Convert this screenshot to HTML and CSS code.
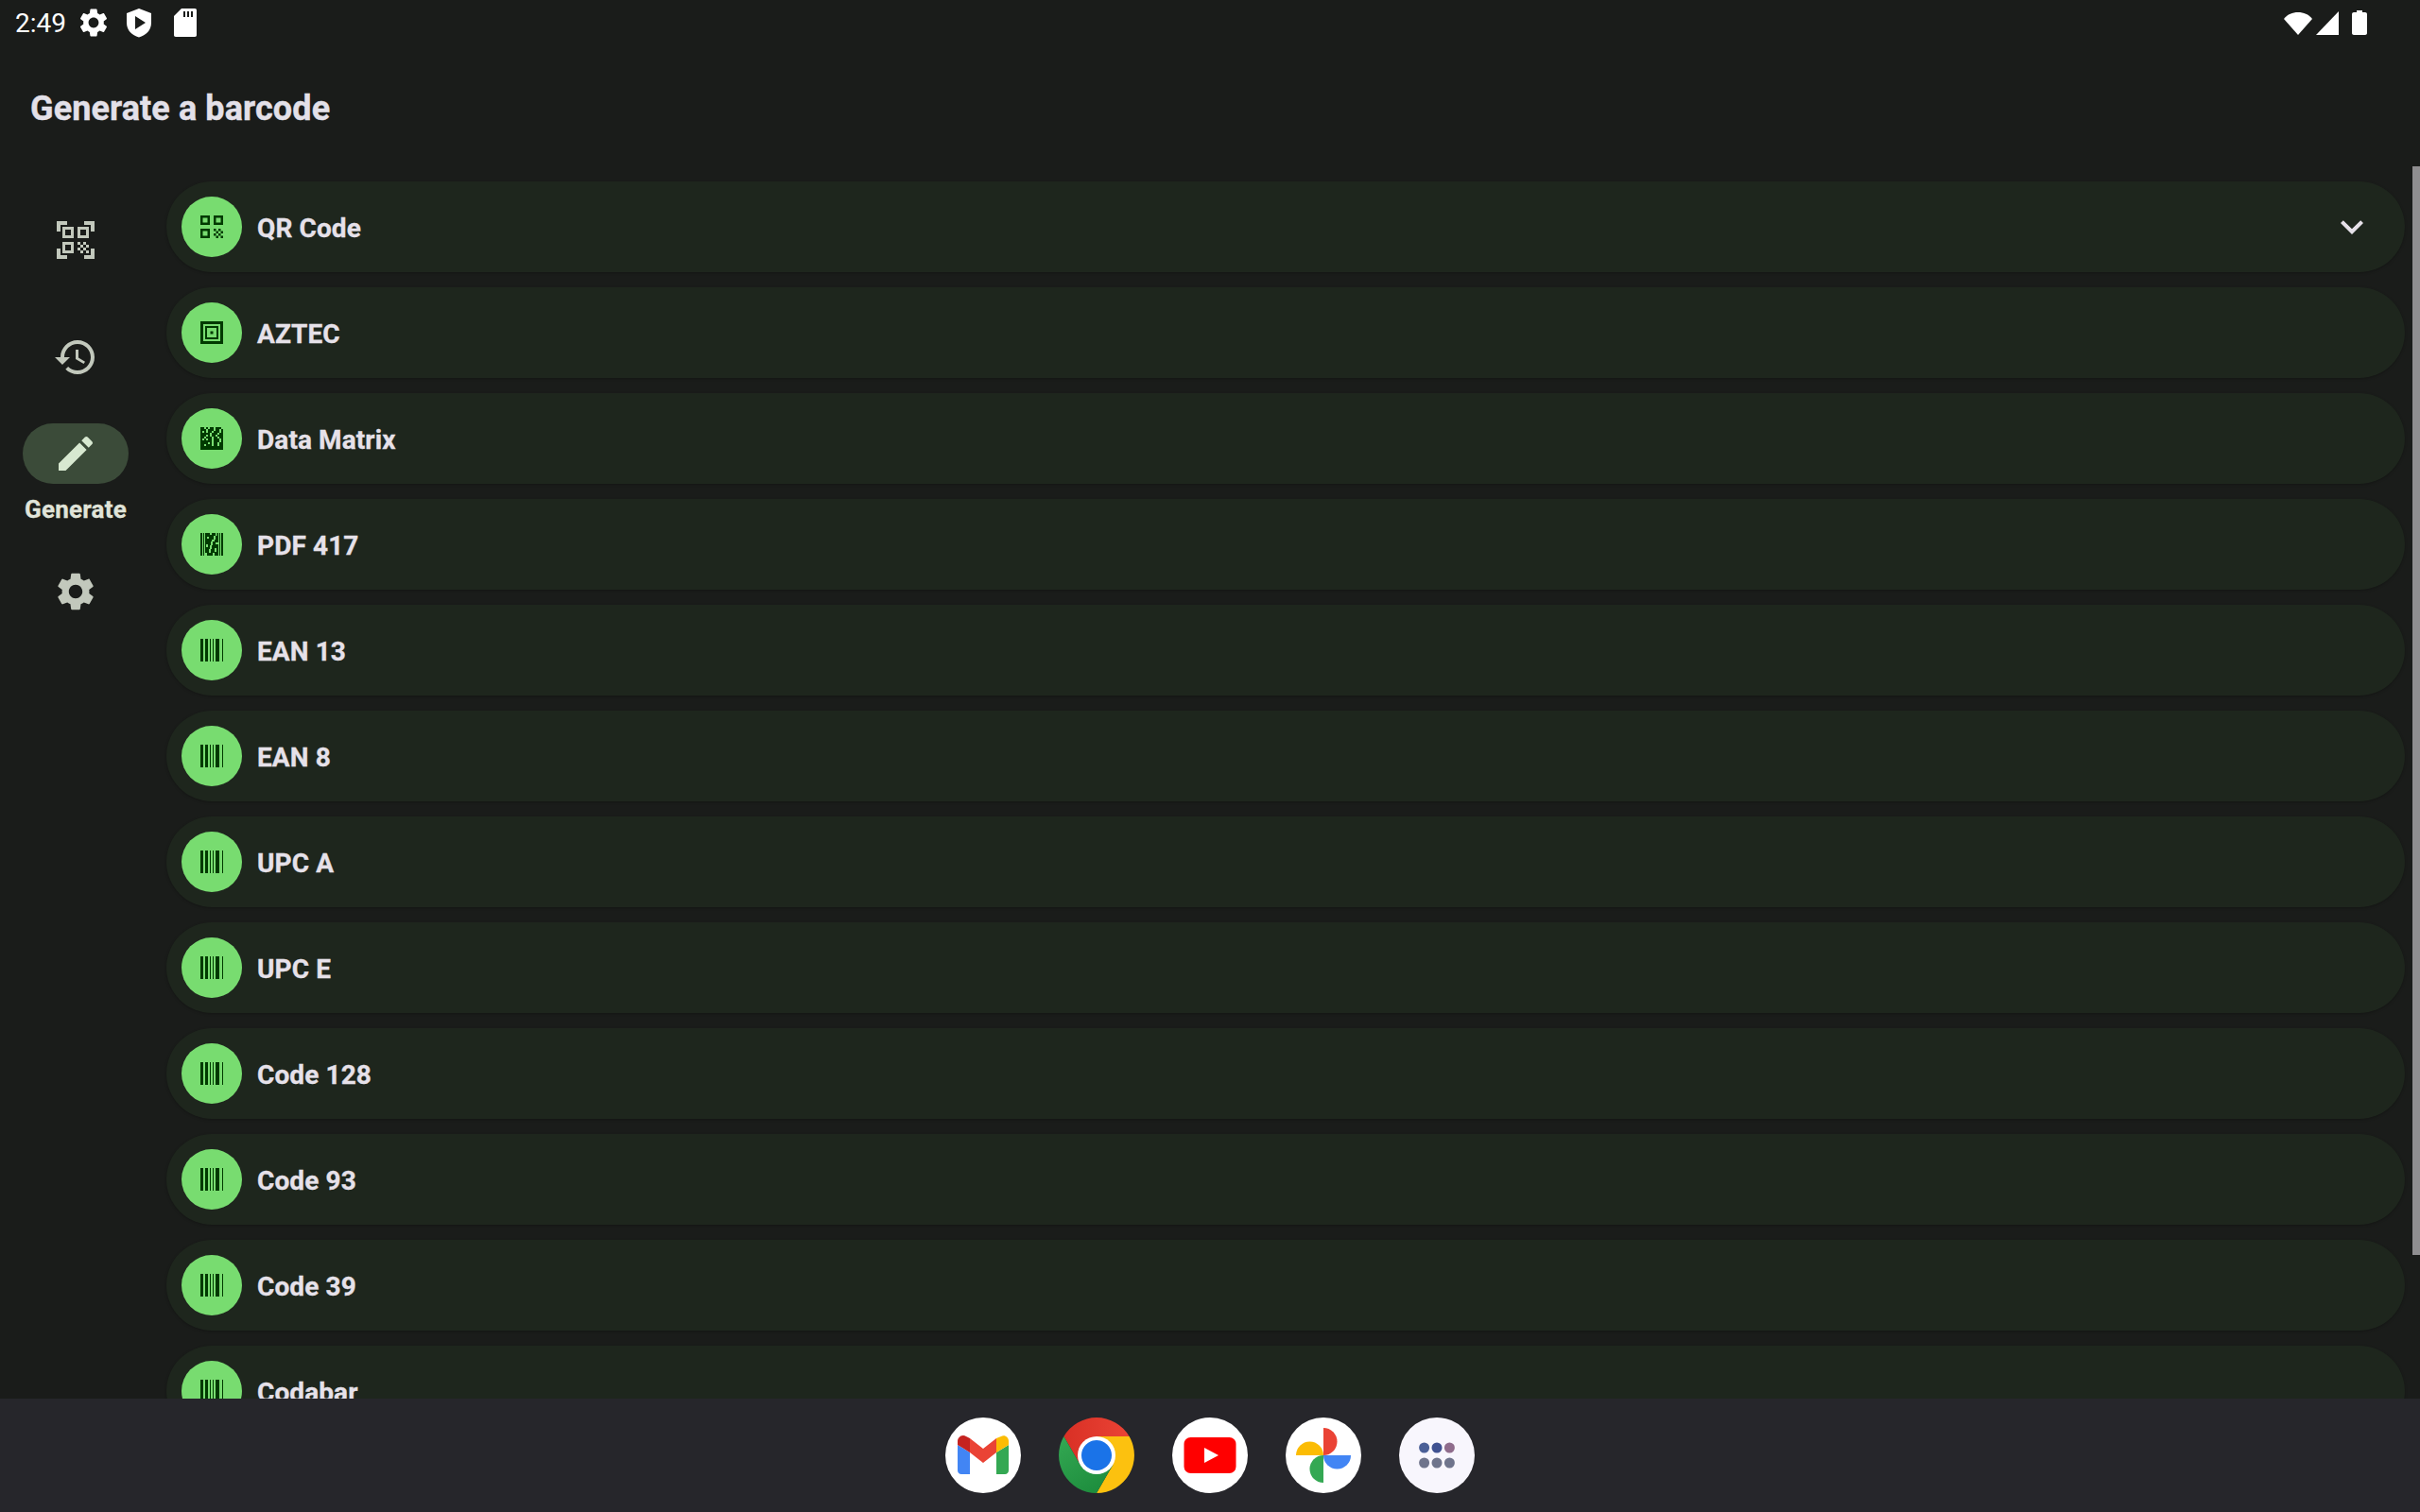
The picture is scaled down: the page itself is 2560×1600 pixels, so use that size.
FILE: index.html
```html
<!DOCTYPE html>
<html lang="en">
  <head>
    <meta charset="UTF-8" />
    <meta name="viewport" content="width=device-width, initial-scale=1.0" />
    <title>Generate a barcode</title>
    <link rel="stylesheet" href="styles.css">
  </head>
  <body>
    <svg class="sprites" aria-hidden="true">
      <symbol id="gear" viewBox="0 0 24 24">
        <path d="M19.14 12.94c.04-.3.06-.61.06-.94 0-.32-.02-.64-.07-.94l2.03-1.58c.18-.14.23-.41.12-.61l-1.92-3.32c-.12-.22-.37-.29-.59-.22l-2.39.96c-.5-.38-1.03-.7-1.62-.94l-.36-2.54c-.04-.24-.24-.41-.48-.41h-3.84c-.24 0-.43.17-.47.41l-.36 2.54c-.59.24-1.13.57-1.62.94l-2.39-.96c-.22-.08-.47 0-.59.22L2.74 8.87c-.12.21-.08.47.12.61l2.03 1.58c-.05.3-.09.63-.09.94s.02.64.07.94l-2.03 1.58c-.18.14-.23.41-.12.61l1.92 3.32c.12.22.37.29.59.22l2.39-.96c.5.38 1.03.7 1.62.94l.36 2.54c.05.24.24.41.48.41h3.84c.24 0 .44-.17.47-.41l.36-2.54c.59-.24 1.13-.56 1.62-.94l2.39.96c.22.08.47 0 .59-.22l1.92-3.32c.12-.22.07-.47-.12-.61l-2.01-1.58zM12 15.6c-1.98 0-3.6-1.62-3.6-3.6s1.62-3.6 3.6-3.6 3.6 1.62 3.6 3.6-1.62 3.6-3.6 3.6z" />
      </symbol>
      <symbol id="barcode" viewBox="0 0 24 24">
        <path d="M0 0h3v24H0zM5 0h3v24H5zM10 0h1v24h-1zM13 0h1v24h-1zM16 0h4v24h-4zM23 0h1v24h-1z" />
      </symbol>
    </svg>

    <div class="status-bar">
      <span class="clock">2:49</span>
      <svg class="status-icon" viewBox="0 0 24 24"><use href="#gear" /></svg>
      <svg class="status-icon" viewBox="0 0 36 36">
        <path fill-rule="evenodd" d="M18 3 31 8v10c0 8-5.500 13.500-13 15.500C10.500 31.500 5 26 5 18V8zM14 11v14l11-7z" />
      </svg>
      <svg class="status-icon" viewBox="0 0 36 36">
        <path fill-rule="evenodd" d="M15 3h14c1.500 0 2 .7 2 2v26c0 1.300-.6 2-2 2H9c-1.400 0-2-.7-2-2V11zM17 6v6h2V6zM21 6v6h2V6zM25 6v6h2V6z" />
      </svg>
      <div class="status-right">
        <svg class="wifi" viewBox="0 0 32 28"><path d="M1 10C5 5 10 3 16 3s11 2 15 7L16 27z" /></svg>
        <svg class="signal" viewBox="0 0 26 28"><path d="M25 2v25H1z" /></svg>
        <svg class="battery" viewBox="0 0 16 28"><path d="M5 1h6v2h3c1 0 2 .7 2 2v20c0 1.300-1 2-2 2H2c-1 0-2-.7-2-2V5c0-1.300 1-2 2-2h3z" /></svg>
      </div>
    </div>

    <header class="app-bar">
      <h1>Generate a barcode</h1>
    </header>

    <main class="content">
      <nav class="rail">
        <div class="rail-item">
          <svg class="rail-icon" viewBox="0 0 48 48">
            <path d="M4 4h11v4H8v7H4zM33 4h11v11h-4V8h-7zM4 33h4v7h7v4H4zM40 33h4v11H33v-4h7z" />
            <path fill-rule="evenodd" d="M10 10h12v12H10zM13 13v6h6v-6zM26 10h12v12H26zM29 13v6h6v-6zM10 26h12v12H10zM13 29v6h6v-6z" />
            <path d="M26 26h3v3h-3zM32 26h3v3h-3zM29 29h3v3h-3zM35 29h3v3h-3zM26 32h3v3h-3zM32 32h3v3h-3zM29 35h3v3h-3zM35 35h3v3h-3z" />
          </svg>
        </div>
        <div class="rail-item">
          <svg class="rail-icon" viewBox="0 0 24 24">
            <path d="M13 3c-4.970 0-9 4.030-9 9H1l3.890 3.890.07.14L9 12H6c0-3.870 3.130-7 7-7s7 3.130 7 7-3.130 7-7 7c-1.930 0-3.680-.79-4.940-2.060l-1.420 1.420C8.270 19.990 10.510 21 13 21c4.970 0 9-4.030 9-9s-4.030-9-9-9zm-1 5v5l4.280 2.540.72-1.210-3.500-2.080V8H12z" />
          </svg>
        </div>
        <div class="rail-item">
          <div class="rail-pill">
            <svg class="rail-icon" viewBox="0 0 24 24">
              <path d="M3 17.250V21h3.750L17.810 9.940l-3.750-3.750L3 17.250zM20.710 7.040c.39-.39.39-1.020 0-1.410l-2.340-2.340c-.39-.39-1.020-.39-1.410 0l-1.830 1.830 3.750 3.750 1.830-1.830z" />
            </svg>
          </div>
          <span class="rail-label">Generate</span>
        </div>
        <div class="rail-item">
          <svg class="rail-icon" viewBox="0 0 24 24"><use href="#gear" /></svg>
        </div>
      </nav>

      <div class="code-list">
        <div class="code-row">
          <span class="code-badge">
            <svg class="code-icon" viewBox="0 0 24 24">
              <path fill-rule="evenodd" d="M0 0h10v10H0zM2.500 2.500v5h5v-5zM14 0h10v10H14zM16.500 2.500v5h5v-5zM0 14h10v10H0zM2.500 16.500v5h5v-5z" />
              <path d="M14 14h2.500v2.500H14zM19 14h2.500v2.500H19zM16.500 16.500H19V19h-2.500zM21.500 16.500H24V19h-2.500zM14 19h2.500v2.500H14zM19 19h2.500v2.500H19zM16.500 21.500H19V24h-2.500zM21.500 21.500H24V24h-2.500z" />
            </svg>
          </span>
          <span class="code-name">QR Code</span>
          <svg class="chevron" viewBox="0 0 24 24"><path d="M16.590 8.590 12 13.170 7.410 8.590 6 10l6 6 6-6z" /></svg>
        </div>
        <div class="code-row">
          <span class="code-badge">
            <svg class="code-icon" viewBox="0 0 24 24">
              <path fill-rule="evenodd" d="M0 0h24v24H0zM3 3v18h18V3zM5 5h14v14H5zM7 7v10h10V7zM10.500 10.500h3v3h-3z" />
            </svg>
          </span>
          <span class="code-name">AZTEC</span>
        </div>
        <div class="code-row">
          <span class="code-badge">
            <svg class="code-icon pixel" viewBox="0 0 24 24">
              <path d="M0 0h24v24H0z" />
              <path class="code-specks" stroke-dasharray="2 2 2 4 2 6" d="M4 1H24M2 5H24M6 9H24M2 13H24M8 17H24" />
              <path class="code-specks" stroke-dasharray="2 6 2 4" d="M6 3H24M10 7H24M4 11H24M12 15H24M4 19H24" />
            </svg>
          </span>
          <span class="code-name">Data Matrix</span>
        </div>
        <div class="code-row">
          <span class="code-badge">
            <svg class="code-icon" viewBox="0 0 24 24">
              <path d="M0 0h2v24H0zM3 0h1v24H3zM20 0h1v24h-1zM22 0h2v24h-2z" />
              <path fill-rule="evenodd" d="M5 0h14v24H5zM10 0h2v2h-2zM16 0h1.500v3H16zM14 3h2v4h-2zM7 4h2v2H7zM12 7h3v2h-3zM11 9h2v4h-2zM16 10h3v2h-3zM6 12h2v3H6zM10 13h2v4h-2zM9 17h2v4H9zM15 16h2v4h-2zM13 21h2v3h-2zM5 21h2v3H5z" />
            </svg>
          </span>
          <span class="code-name">PDF 417</span>
        </div>
        <div class="code-row">
          <span class="code-badge"><svg class="code-icon pixel"><use href="#barcode" /></svg></span>
          <span class="code-name">EAN 13</span>
        </div>
        <div class="code-row">
          <span class="code-badge"><svg class="code-icon pixel"><use href="#barcode" /></svg></span>
          <span class="code-name">EAN 8</span>
        </div>
        <div class="code-row">
          <span class="code-badge"><svg class="code-icon pixel"><use href="#barcode" /></svg></span>
          <span class="code-name">UPC A</span>
        </div>
        <div class="code-row">
          <span class="code-badge"><svg class="code-icon pixel"><use href="#barcode" /></svg></span>
          <span class="code-name">UPC E</span>
        </div>
        <div class="code-row">
          <span class="code-badge"><svg class="code-icon pixel"><use href="#barcode" /></svg></span>
          <span class="code-name">Code 128</span>
        </div>
        <div class="code-row">
          <span class="code-badge"><svg class="code-icon pixel"><use href="#barcode" /></svg></span>
          <span class="code-name">Code 93</span>
        </div>
        <div class="code-row">
          <span class="code-badge"><svg class="code-icon pixel"><use href="#barcode" /></svg></span>
          <span class="code-name">Code 39</span>
        </div>
        <div class="code-row">
          <span class="code-badge"><svg class="code-icon pixel"><use href="#barcode" /></svg></span>
          <span class="code-name">Codabar</span>
        </div>
      </div>

      <div class="scrollbar"></div>
    </main>

    <footer class="dock">
      <svg class="dock-app" viewBox="0 0 80 80">
        <circle cx="40" cy="40" r="40" fill="#fff" />
        <path d="M13 29v27c0 2 1.500 4 4 4h9V37z" fill="#4285f4" />
        <path d="M54 37v23h9c2.500 0 4-2 4-4V29z" fill="#34a853" />
        <path d="M54 37V22l5-2c4-2 8 1 8 5v4z" fill="#fbbc04" />
        <path d="M26 37V22l14 11 14-11v15L40 48z" fill="#ea4335" />
        <path d="M13 29v-4c0-4 5-8 9-5l4 2v15z" fill="#c5221f" />
      </svg>
      <svg class="dock-app" viewBox="0 0 80 80">
        <defs>
          <linearGradient id="chrome-red" x1="0" x2="1" y1="0.500" y2="0.500">
            <stop offset="0" stop-color="#d93025" />
            <stop offset="1" stop-color="#ea4335" />
          </linearGradient>
          <linearGradient id="chrome-green" x1="0" x2="0.600" y1="0" y2="1">
            <stop offset="0" stop-color="#34a853" />
            <stop offset="1" stop-color="#1e8e3e" />
          </linearGradient>
        </defs>
        <path d="M5.400 20A40 40 0 0 1 74.600 20H40L22.700 50z" fill="url(#chrome-red)" />
        <path d="M74.600 20A40 40 0 0 1 40 80L57.300 50 40 20z" fill="#fcc10f" />
        <path d="M40 80A40 40 0 0 1 5.400 20L22.700 50H57.300z" fill="url(#chrome-green)" />
        <circle cx="40" cy="40" r="20" fill="#fff" />
        <circle cx="40" cy="40" r="16" fill="#1a73e8" />
      </svg>
      <svg class="dock-app" viewBox="0 0 80 80">
        <circle cx="40" cy="40" r="40" fill="#fff" />
        <rect x="12.500" y="21" width="55" height="38" rx="7" fill="#f00" />
        <path d="M34 32v16l15-8z" fill="#fff" />
      </svg>
      <svg class="dock-app" viewBox="0 0 80 80">
        <circle cx="40" cy="40" r="40" fill="#fff" />
        <path d="M40 11a14.500 14.500 0 0 1 0 29z" fill="#ea4335" />
        <path d="M11 40a14.500 14.500 0 0 1 29 0z" fill="#fbbc04" />
        <path d="M40 69a14.500 14.500 0 0 1 0-29z" fill="#34a853" />
        <path d="M69 40a14.500 14.500 0 0 1-29 0z" fill="#4285f4" />
      </svg>
      <svg class="dock-app" viewBox="0 0 80 80">
        <circle cx="40" cy="40" r="40" fill="#f8f6fd" />
        <circle cx="26.600" cy="32" r="5.500" fill="#4a5f97" />
        <circle cx="40" cy="32" r="5.500" fill="#3f5191" />
        <circle cx="53.400" cy="32" r="5.500" fill="#8f6c8c" />
        <circle cx="26.600" cy="48" r="5.500" fill="#6f748c" />
        <circle cx="40" cy="48" r="5.500" fill="#6f748c" />
        <circle cx="53.400" cy="48" r="5.500" fill="#6f748c" />
      </svg>
    </footer>
  </body>
</html>
```

FILE: styles.css
```css
* {
  box-sizing: border-box;
}
html,
body {
  height: 100%;
}
body {
  margin: 0;
  height: 1600px;
  display: flex;
  flex-direction: column;
  overflow: hidden;
  background-color: #1a1c1a;
  color: #e6e1e9;
  font-family: Roboto, "Liberation Sans", sans-serif;
}
.sprites {
  display: none;
}

/* status bar */
.status-bar {
  flex: none;
  height: 48px;
  padding: 0 56px 0 16px;
  display: flex;
  align-items: center;
  gap: 12px;
  color: #fff;
  fill: #fff;
}
.clock {
  font-size: 28px;
  margin-right: -1px;
}
.status-icon {
  width: 36px;
  height: 36px;
}
.status-right {
  margin-left: auto;
  display: flex;
  align-items: center;
}
.wifi {
  width: 32px;
  height: 28px;
}
.signal {
  width: 26px;
  height: 28px;
  margin-left: 2px;
}
.battery {
  width: 16px;
  height: 28px;
  margin-left: 13px;
}

/* title */
.app-bar {
  flex: none;
  height: 128px;
  padding: 5px 32px 0;
  display: flex;
  align-items: center;
}
.app-bar h1 {
  margin: 0;
  font-size: 36px;
  font-weight: 700;
  letter-spacing: 0.1px;
  color: #e3e0e8;
  -webkit-text-stroke: 0.4px #e3e0e8;
}

/* rail + list */
.content {
  flex: 1;
  min-height: 0;
  position: relative;
  display: flex;
  overflow: hidden;
}
.rail {
  flex: none;
  width: 160px;
  padding-top: 16px;
  display: grid;
  grid-auto-rows: 124px;
  align-content: start;
  color: #c2c8bc;
  fill: #c2c8bc;
}
.rail-item {
  display: flex;
  flex-direction: column;
  align-items: center;
  justify-content: center;
}
.rail-icon {
  width: 48px;
  height: 48px;
}
.rail-pill {
  width: 112px;
  height: 64px;
  border-radius: 32px;
  display: flex;
  align-items: center;
  justify-content: center;
  background-color: #3b4b39;
  fill: #d7e8d0;
}
.rail-label {
  margin-top: 10px;
  font-size: 26px;
  line-height: 34px;
  font-weight: 700;
  letter-spacing: 0.2px;
  color: #e0e4d9;
  -webkit-text-stroke: 0.3px #e0e4d9;
}
.code-list {
  flex: 1;
  padding: 16px 16px 0;
  display: flex;
  flex-direction: column;
  gap: 16px;
}
.code-row {
  flex: none;
  height: 96px;
  padding: 0 32px 0 16px;
  display: flex;
  align-items: center;
  gap: 16px;
  border-radius: 48px;
  background-color: #1e261d;
  box-shadow: 0 1px 3px rgba(0, 0, 0, 0.25);
}
.code-badge {
  width: 64px;
  height: 64px;
  border-radius: 50%;
  display: flex;
  align-items: center;
  justify-content: center;
  background-color: #78dc70;
  color: #003a00;
  fill: #003a00;
}
.code-icon {
  width: 24px;
  height: 24px;
}
.code-specks {
  fill: none;
  stroke: #78dc70;
  stroke-width: 2;
}
.pixel {
  shape-rendering: crispEdges;
}
.code-name {
  padding-top: 2px;
  font-size: 28px;
  font-weight: 700;
  letter-spacing: 0.1px;
  -webkit-text-stroke: 0.3px #e6e1e9;
}
.chevron {
  width: 48px;
  height: 48px;
  margin-left: auto;
  fill: #e6e1e9;
}
.scrollbar {
  position: absolute;
  top: 0;
  right: 0;
  width: 8px;
  height: 1152px;
  background-color: #8f8e90;
}

/* dock */
.dock {
  flex: none;
  height: 120px;
  display: flex;
  align-items: center;
  justify-content: center;
  gap: 40px;
  background-color: #26262b;
}
.dock-app {
  width: 80px;
  height: 80px;
}
```
